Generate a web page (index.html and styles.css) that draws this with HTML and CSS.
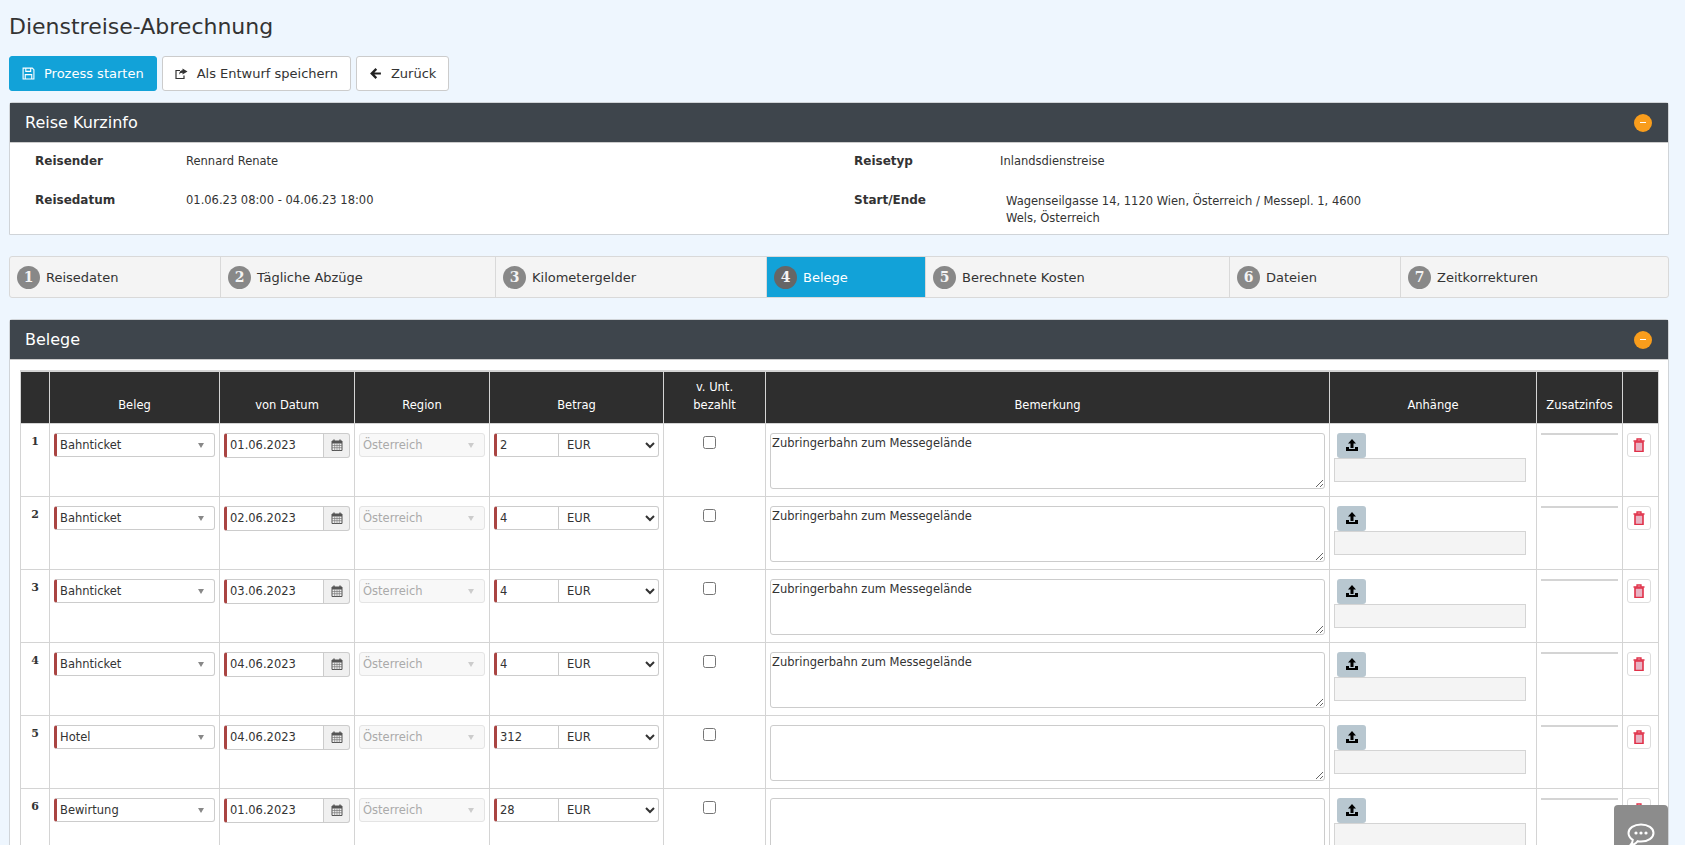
FILE: index.html
```html
<!DOCTYPE html>
<html lang="de">
<head>
  <meta charset="UTF-8" />
  <title>Dienstreise-Abrechnung</title>
  <link rel="stylesheet" href="styles.css">
</head>
<body>
  <svg class="icon-defs" aria-hidden="true">
    <symbol id="i-cal" viewBox="0 0 12 12"><path d="M1 2h10v9.5H1z" fill="#f0f0f0" stroke="#555"/><path d="M1 2h10v2.5H1z" fill="#555"/><path d="M3 .5v3M9 .5v3" stroke="#555" stroke-width="1.4"/><path d="M1 6.500h10M1 8.700h10M3.700 4.500v7M6 4.500v7M8.300 4.500v7" stroke="#777" stroke-width=".7"/></symbol>
    <symbol id="i-upload" viewBox="0 0 14 14"><path d="M7 1l4 4.500H8.500V10h-3V5.500H3z" fill="#000"/><path d="M1 9h3v2h6V9h3v4H1z" fill="#000"/></symbol>
    <symbol id="i-trash" viewBox="0 0 12 14"><path d="M2 4h8v9.500H2z" fill="#e8b4c4" stroke="#e03048" stroke-width="1.600"/><path d="M.5 3h11M4 2.500V1h4v1.500" fill="none" stroke="#e03048" stroke-width="1.300"/></symbol>
  </svg>

  <h1 class="page-title">Dienstreise-Abrechnung</h1>

  <div class="toolbar">
    <a class="btn btn-primary">
      <svg class="btn-icon" viewBox="0 0 12 12"><path d="M1 1h8.500L11 2.500V11H1z" fill="none" stroke="#fff"/><path d="M3.500 1v3h4.500V1M3 11V7h6v4" fill="none" stroke="#fff"/></svg>
      Prozess starten
    </a>
    <a class="btn">
      <svg class="btn-icon" viewBox="0 0 13 12"><path d="M9 8v3H1V3h4" fill="none" stroke="#333" stroke-width="1.200"/><path d="M7.500 1l5 3-5 3V5.300C5.500 5.300 4.500 6 4 7.500 4 4.500 5.500 2.800 7.500 2.700z" fill="#333"/></svg>
      Als Entwurf speichern
    </a>
    <a class="btn">
      <svg class="btn-icon" viewBox="0 0 12 12"><path d="M6 1L1 6l5 5 1.500-1.500L5 7h6V5H5l2.500-2.500z" fill="#222"/></svg>
      Zurück
    </a>
  </div>

  <section class="panel">
    <header class="panel-head">
      <h2>Reise Kurzinfo</h2>
      <span class="collapse"></span>
    </header>
    <div class="info">
      <b>Reisender</b><span>Rennard Renate</span>
      <b>Reisetyp</b><span>Inlandsdienstreise</span>
      <b>Reisedatum</b><span>01.06.23 08:00 - 04.06.23 18:00</span>
      <b>Start/Ende</b><span class="route">Wagenseilgasse 14, 1120 Wien, Österreich / Messepl. 1, 4600 Wels, Österreich</span>
    </div>
  </section>

  <nav class="tabs">
    <a class="tab"><i>1</i>Reisedaten</a>
    <a class="tab"><i>2</i>Tägliche Abzüge</a>
    <a class="tab"><i>3</i>Kilometergelder</a>
    <a class="tab active"><i>4</i>Belege</a>
    <a class="tab"><i>5</i>Berechnete Kosten</a>
    <a class="tab"><i>6</i>Dateien</a>
    <a class="tab"><i>7</i>Zeitkorrekturen</a>
  </nav>

  <section class="panel">
    <header class="panel-head">
      <h2>Belege</h2>
      <span class="collapse"></span>
    </header>
    <div class="panel-body">
      <table class="belege">
        <colgroup>
          <col class="c-nr"><col class="c-beleg"><col class="c-date"><col class="c-region"><col class="c-betrag">
          <col class="c-paid"><col class="c-note"><col class="c-file"><col class="c-info"><col class="c-del">
        </colgroup>
        <thead>
          <tr>
            <th></th><th>Beleg</th><th>von Datum</th><th>Region</th><th>Betrag</th>
            <th>v. Unt.<br>bezahlt</th><th>Bemerkung</th><th>Anhänge</th><th>Zusatzinfos</th><th></th>
          </tr>
        </thead>
        <tbody>
          <tr>
            <td class="nr">1</td>
            <td><div class="combo req">Bahnticket</div></td>
            <td><div class="date"><input type="text" value="01.06.2023"><span class="addon"><svg><use href="#i-cal"/></svg></span></div></td>
            <td><div class="combo off">Österreich</div></td>
            <td><div class="amount"><input type="text" value="2"><select><option>EUR</option></select></div></td>
            <td class="paid"><input type="checkbox"></td>
            <td><textarea>Zubringerbahn zum Messegelände</textarea></td>
            <td class="files"><span class="upload"><svg><use href="#i-upload"/></svg></span><div class="filebox"></div></td>
            <td><div class="infoline"></div></td>
            <td><span class="del"><svg><use href="#i-trash"/></svg></span></td>
          </tr>
          <tr>
            <td class="nr">2</td>
            <td><div class="combo req">Bahnticket</div></td>
            <td><div class="date"><input type="text" value="02.06.2023"><span class="addon"><svg><use href="#i-cal"/></svg></span></div></td>
            <td><div class="combo off">Österreich</div></td>
            <td><div class="amount"><input type="text" value="4"><select><option>EUR</option></select></div></td>
            <td class="paid"><input type="checkbox"></td>
            <td><textarea>Zubringerbahn zum Messegelände</textarea></td>
            <td class="files"><span class="upload"><svg><use href="#i-upload"/></svg></span><div class="filebox"></div></td>
            <td><div class="infoline"></div></td>
            <td><span class="del"><svg><use href="#i-trash"/></svg></span></td>
          </tr>
          <tr>
            <td class="nr">3</td>
            <td><div class="combo req">Bahnticket</div></td>
            <td><div class="date"><input type="text" value="03.06.2023"><span class="addon"><svg><use href="#i-cal"/></svg></span></div></td>
            <td><div class="combo off">Österreich</div></td>
            <td><div class="amount"><input type="text" value="4"><select><option>EUR</option></select></div></td>
            <td class="paid"><input type="checkbox"></td>
            <td><textarea>Zubringerbahn zum Messegelände</textarea></td>
            <td class="files"><span class="upload"><svg><use href="#i-upload"/></svg></span><div class="filebox"></div></td>
            <td><div class="infoline"></div></td>
            <td><span class="del"><svg><use href="#i-trash"/></svg></span></td>
          </tr>
          <tr>
            <td class="nr">4</td>
            <td><div class="combo req">Bahnticket</div></td>
            <td><div class="date"><input type="text" value="04.06.2023"><span class="addon"><svg><use href="#i-cal"/></svg></span></div></td>
            <td><div class="combo off">Österreich</div></td>
            <td><div class="amount"><input type="text" value="4"><select><option>EUR</option></select></div></td>
            <td class="paid"><input type="checkbox"></td>
            <td><textarea>Zubringerbahn zum Messegelände</textarea></td>
            <td class="files"><span class="upload"><svg><use href="#i-upload"/></svg></span><div class="filebox"></div></td>
            <td><div class="infoline"></div></td>
            <td><span class="del"><svg><use href="#i-trash"/></svg></span></td>
          </tr>
          <tr>
            <td class="nr">5</td>
            <td><div class="combo req">Hotel</div></td>
            <td><div class="date"><input type="text" value="04.06.2023"><span class="addon"><svg><use href="#i-cal"/></svg></span></div></td>
            <td><div class="combo off">Österreich</div></td>
            <td><div class="amount"><input type="text" value="312"><select><option>EUR</option></select></div></td>
            <td class="paid"><input type="checkbox"></td>
            <td><textarea></textarea></td>
            <td class="files"><span class="upload"><svg><use href="#i-upload"/></svg></span><div class="filebox"></div></td>
            <td><div class="infoline"></div></td>
            <td><span class="del"><svg><use href="#i-trash"/></svg></span></td>
          </tr>
          <tr>
            <td class="nr">6</td>
            <td><div class="combo req">Bewirtung</div></td>
            <td><div class="date"><input type="text" value="01.06.2023"><span class="addon"><svg><use href="#i-cal"/></svg></span></div></td>
            <td><div class="combo off">Österreich</div></td>
            <td><div class="amount"><input type="text" value="28"><select><option>EUR</option></select></div></td>
            <td class="paid"><input type="checkbox"></td>
            <td><textarea></textarea></td>
            <td class="files"><span class="upload"><svg><use href="#i-upload"/></svg></span><div class="filebox"></div></td>
            <td><div class="infoline"></div></td>
            <td><span class="del"><svg><use href="#i-trash"/></svg></span></td>
          </tr>
        </tbody>
      </table>
    </div>
  </section>

  <div class="chat">
    <svg viewBox="0 0 28 24"><path d="M14 1.500c7 0 12.500 3.700 12.500 8.500S21 18.500 14 18.500c-1.200 0-2.300-.1-3.300-.3C9 20.500 6.500 22 3.500 22c1.500-1.500 2.300-3.300 2.300-5.200C3.200 15.300 1.500 12.800 1.500 10 1.500 5.200 7 1.500 14 1.500z" fill="none" stroke="#fff" stroke-width="2"/><circle cx="9" cy="10" r="1.600" fill="#fff"/><circle cx="14" cy="10" r="1.600" fill="#fff"/><circle cx="19" cy="10" r="1.600" fill="#fff"/></svg>
  </div>
</body>
</html>
```

FILE: styles.css
```css
html, body {
  height: 100%;
  overflow: hidden;
}
body {
  font-family: "DejaVu Sans", sans-serif;
  font-size: 12px;
  background-color: #eef6fe;
  color: #333;
  margin: 0;
  padding: 0 16px 0 9px;
}
.icon-defs {
  display: none;
}
.page-title {
  font-size: 22px;
  font-weight: normal;
  line-height: 30px;
  margin: 0;
  padding-top: 12px;
  color: #333;
}
.toolbar {
  display: flex;
  align-items: flex-end;
  gap: 5px;
  margin-top: 14px;
  margin-bottom: 11px;
}
.btn {
  display: flex;
  align-items: center;
  gap: 9px;
  height: 33px;
  padding: 0 12px;
  background-color: #fff;
  border: 1px solid #ccc;
  border-radius: 3px;
  font-size: 13px;
  color: #333;
}
.btn-primary {
  background-color: #12a2d8;
  border-color: #12a2d8;
  color: #fff;
}
.btn-icon {
  width: 13px;
  height: 13px;
}
.panel {
  background-color: #fff;
  border: 1px solid #d0d4d8;
  border-radius: 3px 3px 0 0;
}
.panel-head {
  display: flex;
  align-items: center;
  justify-content: space-between;
  height: 39px;
  padding: 0 16px 0 15px;
  background-color: #3e454c;
  border-bottom: 1px solid #ccc;
}
.panel-head h2 {
  font-size: 16px;
  font-weight: normal;
  color: #fff;
  margin: 0;
}
.collapse {
  display: flex;
  align-items: center;
  justify-content: center;
  width: 18px;
  height: 18px;
  border-radius: 50%;
  background-color: #f99d1c;
}
.collapse::before {
  content: "";
  width: 6px;
  height: 1.5px;
  background-color: #fff;
}
.info {
  display: grid;
  grid-template-columns: 151px 668px 146px 1fr;
  grid-auto-rows: 39px;
  height: 91px;
  padding-left: 25px;
  padding-top: 10px;
  box-sizing: border-box;
  line-height: 17px;
}
.info b {
  color: #333;
}
.info span {
  font-size: 11.500px;
  color: #333;
}
.info .route {
  width: 372px;
  padding-left: 6px;
  padding-top: 1px;
}
.tabs {
  display: grid;
  grid-template-columns: 211px 275px 271px 159px 304px 171px 1fr;
  height: 40px;
  margin: 21px 0;
  background-color: #f4f4f4;
  border: 1px solid #d9d9d9;
  border-radius: 3px;
}
.tab {
  display: flex;
  align-items: center;
  gap: 6px;
  padding-left: 7px;
  font-size: 13px;
  color: #333;
  border-right: 1px solid #d9d9d9;
}
.tab:last-child {
  border-right: none;
}
.tab i {
  display: flex;
  align-items: center;
  justify-content: center;
  width: 23px;
  height: 23px;
  border-radius: 50%;
  background-color: #888;
  color: #f4f4f4;
  font-family: "DejaVu Serif", serif;
  font-style: normal;
  font-weight: bold;
  font-size: 14px;
}
.tab.active {
  background-color: #12a2d8;
  color: #fff;
}
.tab.active i {
  background-color: #666;
}
.panel-body {
  padding: 10px 10px 0;
}
.belege {
  width: 1638px;
  table-layout: fixed;
  border-collapse: collapse;
  border-top: 2px solid #d4d4d4;
}
.c-nr { width: 29px; }
.c-beleg { width: 170px; }
.c-date { width: 135px; }
.c-region { width: 135px; }
.c-betrag { width: 174px; }
.c-paid { width: 102px; }
.c-note { width: 564px; }
.c-file { width: 207px; }
.c-info { width: 86px; }
.c-del { width: 36px; }
.belege th {
  height: 52px;
  box-sizing: border-box;
  padding: 0 2px 9px;
  background-color: #2e2e2e;
  border: 1px solid #d4d4d4;
  border-top: none;
  color: #fff;
  font-size: 11.500px;
  font-weight: normal;
  line-height: 18px;
  vertical-align: bottom;
  text-align: center;
}
.belege td {
  height: 73px;
  box-sizing: border-box;
  padding: 9px 4px 0;
  border: 1px solid #d4d4d4;
  vertical-align: top;
}
.belege td.nr {
  padding-top: 11px;
  font-family: "DejaVu Serif", serif;
  font-weight: bold;
  font-size: 11px;
  text-align: center;
}
.combo {
  position: relative;
  height: 24px;
  box-sizing: border-box;
  padding-left: 3px;
  background-color: #fff;
  border: 1px solid #ccc;
  border-radius: 3px;
  line-height: 22px;
  font-size: 11.500px;
}
.combo::after {
  content: "";
  position: absolute;
  right: 10px;
  top: 9px;
  border-left: 3.500px solid transparent;
  border-right: 3.500px solid transparent;
  border-top: 5px solid #888;
}
.combo.req,
.date input,
.amount input {
  border-left: 3px solid #a94442;
}
.combo.off {
  margin-left: 0;
  background-color: #f8f8f8;
  border-color: #e4e4e4;
  color: #aaa;
}
.combo.off::after {
  border-top-color: #ccc;
}
.date {
  display: flex;
  height: 25px;
}
.date input,
.amount input {
  box-sizing: border-box;
  min-width: 0;
  flex: 1;
  height: 100%;
  padding: 0 3px;
  font: 11.500px "DejaVu Sans", sans-serif;
  color: #333;
  background-color: #fff;
  border-top: 1px solid #ccc;
  border-right: 1px solid #ccc;
  border-bottom: 1px solid #ccc;
  border-radius: 3px 0 0 3px;
  outline: none;
}
.addon {
  display: flex;
  align-items: center;
  justify-content: center;
  width: 25px;
  background-color: #f0f0f0;
  border: 1px solid #ccc;
  border-left: none;
  border-radius: 0 3px 3px 0;
}
.addon svg {
  width: 12px;
  height: 12px;
}
.amount {
  display: flex;
  height: 24px;
}
.amount input {
  flex: none;
  width: 65px;
}
.amount select {
  flex: 1;
  min-width: 0;
  height: 100%;
  padding-left: 4px;
  font: 11.500px "DejaVu Sans", sans-serif;
  color: #333;
  background-color: #fff;
  border: 1px solid #ccc;
  border-left: none;
  border-radius: 0 3px 3px 0;
}
.belege td.paid {
  text-align: center;
  padding-top: 0;
}
.paid input {
  width: 13px;
  height: 13px;
  margin: 12px 10px 0 0;
}
textarea {
  display: block;
  box-sizing: border-box;
  width: 555px;
  height: 56px;
  padding: 2px 1px;
  font: 11.500px "DejaVu Sans", sans-serif;
  color: #333;
  border: 1px solid #ccc;
  border-radius: 3px;
  outline: none;
}
.belege td.files {
  padding-left: 4px;
}
.upload {
  display: flex;
  align-items: center;
  justify-content: center;
  width: 29px;
  height: 25px;
  margin-left: 3px;
  background-color: #b8c7d0;
  border-radius: 3px;
}
.upload svg {
  width: 14px;
  height: 14px;
}
.filebox {
  width: 192px;
  height: 24px;
  box-sizing: border-box;
  background-color: #f4f4f4;
  border: 1px solid #d4d4d4;
}
.infoline {
  height: 2px;
  background-color: #d4d4d4;
}
.del {
  display: flex;
  align-items: center;
  justify-content: center;
  width: 24px;
  height: 24px;
  box-sizing: border-box;
  background-color: #fff;
  border: 1px solid #ddd;
  border-radius: 3px;
}
.del svg {
  width: 12px;
  height: 14px;
}
.chat {
  position: fixed;
  right: 17px;
  bottom: 0;
  width: 54px;
  height: 40px;
  display: flex;
  justify-content: center;
  padding-top: 18px;
  box-sizing: border-box;
  background-color: #8c8c8c;
  border-radius: 4px 4px 0 0;
}
.chat svg {
  width: 28px;
  height: 24px;
  flex: none;
}
```
